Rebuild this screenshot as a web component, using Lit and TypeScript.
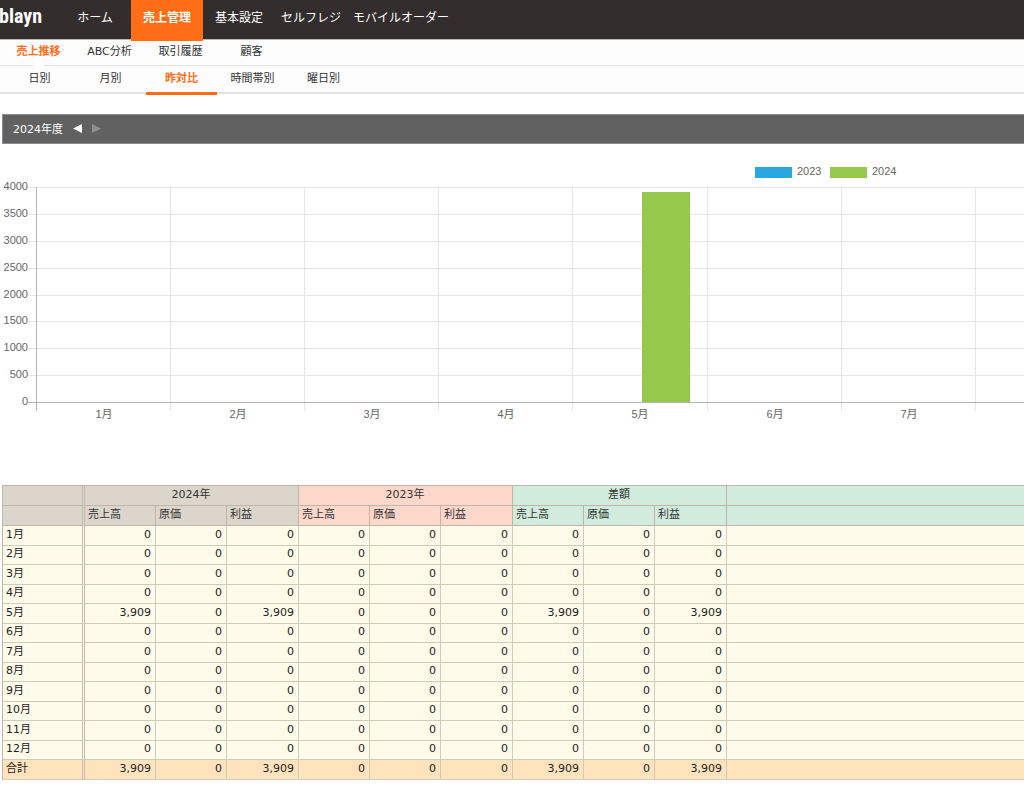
import { LitElement, html, svg, css } from "lit";
import { customElement, property, state } from "lit/decorators.js";
import { classMap } from "lit/directives/class-map.js";

interface NavItem {
  label: string;
  active?: boolean;
}

interface Series {
  name: string;
  color: string;
  values: number[];
}

const MONTHS = Array.from({ length: 12 }, (_, i) => `${i + 1}月`);
const SALES_2024 = MONTHS.map((_, i) => (i === 4 ? 3909 : 0));
const SALES_2023 = MONTHS.map(() => 0);
const METRICS = ["売上高", "原価", "利益"];

const format = (n: number) => n.toLocaleString("en-US");

@customElement("site-header")
class SiteHeader extends LitElement {
  static styles = css`
    :host {
      display: block;
    }
    a {
      color: inherit;
      text-decoration: none;
    }
    ul {
      display: flex;
      margin: 0;
      padding: 0;
      list-style: none;
    }
    .bar {
      display: flex;
      height: 39px;
      background: #332e2d;
      color: #fff;
      border-bottom: 1px solid #b9b7b7;
    }
    .logo {
      width: 59px;
      font: bold 20px/32px "Liberation Sans Narrow", "Roboto Condensed", "DejaVu Sans Condensed", sans-serif;
      text-indent: -1px;
    }
    .main {
      font-size: 12px;
    }
    .main a {
      display: block;
      min-width: 72px;
      box-sizing: border-box;
      padding: 0 6px;
      height: 41px;
      line-height: 37px;
      text-align: center;
      white-space: nowrap;
    }
    .main a.active {
      position: relative;
      background: #ff6d17;
      font-weight: bold;
    }
    .sub {
      background: #fcfcfc;
      color: #333;
      padding-left: 3px;
      border-bottom: 1px solid #e2e2e2;
    }
    .sub a {
      position: relative;
      display: block;
      width: 71px;
      height: 25px;
      line-height: 24px;
      text-align: center;
      white-space: nowrap;
    }
    .sub a.active {
      color: #ff6d17;
      font-weight: bold;
    }
    .section a.active::after {
      content: "";
      position: absolute;
      left: 30px;
      bottom: -1px;
      border: 6px solid transparent;
      border-top: 0;
      border-bottom: 5px solid #fff;
    }
    .period {
      padding-left: 4px;
      border-bottom: 2px solid #e2e2e2;
    }
    .period a {
      height: 26px;
      line-height: 26px;
    }
    .period a.active::after {
      content: "";
      position: absolute;
      inset: auto 0 -3px;
      height: 3px;
      background: #ff6d17;
    }
  `;

  private items(list: NavItem[]) {
    return list.map(
      (item) => html`<li><a href="#" class=${classMap({ active: !!item.active })}>${item.label}</a></li>`
    );
  }

  render() {
    return html`
      <header class="bar">
        <a class="logo" href="#">blayn</a>
        <nav>
          <ul class="main">
            ${this.items([
              { label: "ホーム" },
              { label: "売上管理", active: true },
              { label: "基本設定" },
              { label: "セルフレジ" },
              { label: "モバイルオーダー" },
            ])}
          </ul>
        </nav>
      </header>
      <nav>
        <ul class="sub section">
          ${this.items([
            { label: "売上推移", active: true },
            { label: "ABC分析" },
            { label: "取引履歴" },
            { label: "顧客" },
          ])}
        </ul>
        <ul class="sub period">
          ${this.items([
            { label: "日別" },
            { label: "月別" },
            { label: "昨対比", active: true },
            { label: "時間帯別" },
            { label: "曜日別" },
          ])}
        </ul>
      </nav>
    `;
  }
}

@customElement("sales-chart")
class SalesChart extends LitElement {
  static styles = css`
    :host {
      display: block;
      overflow: hidden;
    }
    svg {
      display: block;
    }
    text {
      font: 11px "Liberation Sans", "Noto Sans CJK JP", sans-serif;
      fill: #666;
    }
    .grid {
      stroke: #e6e6e6;
    }
    .axis {
      stroke: #b4b4b4;
    }
    .end {
      text-anchor: end;
    }
    .middle {
      text-anchor: middle;
    }
  `;

  @property({ attribute: false }) series: Series[] = [];
  @state() private room = window.innerWidth;

  private onResize = () => {
    this.room = window.innerWidth;
  };

  connectedCallback() {
    super.connectedCallback();
    window.addEventListener("resize", this.onResize);
  }

  disconnectedCallback() {
    window.removeEventListener("resize", this.onResize);
    super.disconnectedCallback();
  }

  render() {
    const left = 37;
    const top = 43;
    const base = 258;
    const step = 134;
    const max = 4000;
    const right = left + step * 12 + 6;
    const ticks = Array.from({ length: 9 }, (_, i) => i * 500);
    const y = (v: number) => Math.round(base - (v / max) * (base - top));
    const x = (i: number) => left + Math.round(i * 134.1);
    // A month is labelled only where the whole label fits in the window.
    const fits = (i: number) => x(i) + 80 < this.room;
    return html`
      <svg width="1652" height="300" role="img" aria-label="売上高">
        ${ticks.map(
          (t) => svg`
            <line class="grid" x1="28" x2=${right} y1=${y(t) + 0.5} y2=${y(t) + 0.5}></line>
            <text class="end" x="28" y=${y(t) + 3}>${t}</text>`
        )}
        ${MONTHS.map(
          (m, i) => svg`
            <line class="grid" x1=${x(i + 1) - 0.5} x2=${x(i + 1) - 0.5} y1=${top} y2=${base + 9}></line>
            ${fits(i) ? svg`<text class="middle" x=${x(i) + 67} y=${base + 16}>${m}</text>` : null}`
        )}
        <line class="axis" x1=${left - 0.5} x2=${left - 0.5} y1=${top} y2=${base + 9}></line>
        ${this.series.map((s, n) =>
          s.values.map(
            (v, i) =>
              svg`<rect x=${x(i) + 21 + n * 48} y=${y(v)} width="48" height=${base - y(v)} fill=${s.color}></rect>`
          )
        )}
        <line class="axis" x1="28" x2=${right} y1=${base + 0.5} y2=${base + 0.5}></line>
        ${this.series.map(
          (s, n) => svg`
            <rect x=${755 + n * 75} y="23" width="37" height="11" fill=${s.color}></rect>
            <text x=${797 + n * 75} y="31">${s.name}</text>`
        )}
      </svg>
    `;
  }
}

@customElement("sales-table")
class SalesTable extends LitElement {
  static styles = css`
    :host {
      display: block;
    }
    table {
      width: 100%;
      table-layout: fixed;
      border-collapse: separate;
      border-spacing: 0;
      border: solid #bfb6a8;
      border-width: 1px 0 0 1px;
      box-sizing: border-box;
      color: #222;
    }
    .month {
      width: 82px;
    }
    .num {
      width: 71px;
    }
    .wide {
      width: 72px;
    }
    th,
    td {
      box-sizing: border-box;
      height: 20px;
      padding: 0 4px 2px 3px;
      line-height: 16px;
      border: solid #d0cab9;
      border-width: 0 1px 1px 0;
      text-align: right;
      font-weight: normal;
      white-space: nowrap;
    }
    tbody tr:nth-child(even) > * {
      height: 19px;
    }
    tr > :first-child {
      border-right: 3px double #c4bcae;
      text-align: left;
    }
    tr > :last-child {
      border-right: 0;
    }
    thead th {
      border-color: #bfb6a8;
      text-align: left;
      color: #333;
    }
    thead .group {
      text-align: center;
    }
    .current {
      background: #dcd5cb;
    }
    .previous {
      background: #fcd7ca;
    }
    .difference {
      background: #d1ecdc;
    }
    tbody {
      background: #fffbeb;
    }
    tfoot {
      background: #ffe3bd;
    }
  `;

  private row(label: string, now: number, before: number) {
    const diff = now - before;
    return html`<tr>
      <th scope="row">${label}</th>
      ${[now, 0, now, before, 0, before, diff, 0, diff].map((v) => html`<td>${format(v)}</td>`)}
      <td></td>
    </tr>`;
  }

  render() {
    const groups = [
      { label: "2024年", tone: "current" },
      { label: "2023年", tone: "previous" },
      { label: "差額", tone: "difference" },
    ];
    const sum = (list: number[]) => list.reduce((a, b) => a + b, 0);
    return html`
      <table>
        <colgroup>
          <col class="month" />
          ${groups.map(() => html`<col class="num" /><col class="num" /><col class="wide" />`)}
          <col />
        </colgroup>
        <thead>
          <tr>
            <th class="current"></th>
            ${groups.map((g) => html`<th class="group ${g.tone}" colspan="3" scope="colgroup">${g.label}</th>`)}
            <th class="difference"></th>
          </tr>
          <tr>
            <th class="current"></th>
            ${groups.map((g) => METRICS.map((m) => html`<th class=${g.tone} scope="col">${m}</th>`))}
            <th class="difference"></th>
          </tr>
        </thead>
        <tbody>
          ${MONTHS.map((m, i) => this.row(m, SALES_2024[i], SALES_2023[i]))}
        </tbody>
        <tfoot>
          ${this.row("合計", sum(SALES_2024), sum(SALES_2023))}
        </tfoot>
      </table>
    `;
  }
}

@customElement("app-root")
class AppRoot extends LitElement {
  static styles = css`
    :host {
      display: block;
      background: #fff;
      font: 11px "DejaVu Sans", "Noto Sans CJK JP", sans-serif;
    }
    main {
      padding: 20px 0 8px 2px;
    }
    .year {
      display: flex;
      align-items: center;
      gap: 10px;
      height: 30px;
      box-sizing: border-box;
      padding: 0 10px 1px;
      background: #616161;
      border: solid #8c8c8c;
      border-width: 1px 0 1px 1px;
      color: #fff;
    }
    h1 {
      margin: 0;
      padding-bottom: 2px;
      font: inherit;
    }
    button {
      display: block;
      padding: 0;
      border: 0;
      background: none;
      color: #fff;
    }
    button:disabled {
      color: #8f8f8f;
    }
    svg {
      display: block;
      fill: currentColor;
    }
    sales-chart {
      margin-left: -2px;
    }
    sales-table {
      margin-top: 41px;
    }
  `;

  private series: Series[] = [
    { name: "2023", color: "#29a8df", values: SALES_2023 },
    { name: "2024", color: "#96c94b", values: SALES_2024 },
  ];

  render() {
    return html`
      <site-header></site-header>
      <main>
        <div class="year">
          <h1>2024年度</h1>
          <button aria-label="前年度">
            <svg width="9" height="9"><path d="M9 0v9L0 4.500z"></path></svg>
          </button>
          <button aria-label="次年度" disabled>
            <svg width="9" height="9"><path d="M0 0v9l9-4.500z"></path></svg>
          </button>
        </div>
        <sales-chart .series=${this.series}></sales-chart>
        <sales-table></sales-table>
      </main>
    `;
  }
}
